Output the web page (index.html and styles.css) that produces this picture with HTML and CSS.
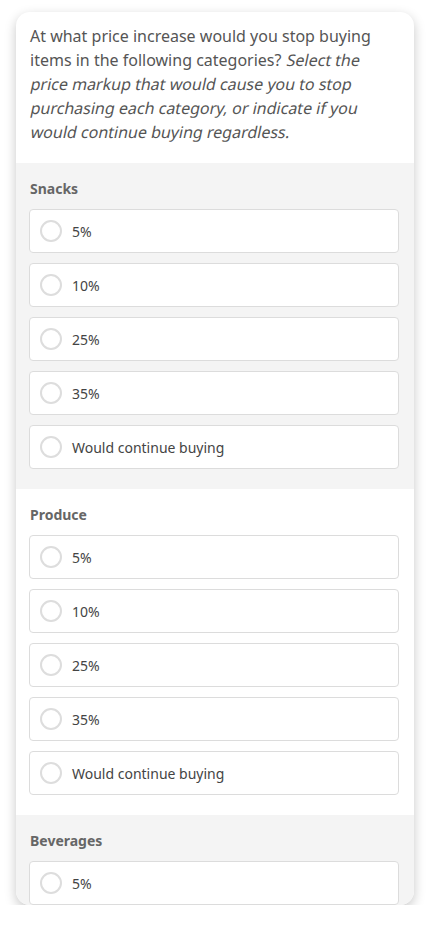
FILE: index.html
```html
<!DOCTYPE html>
<html>
<head>
<meta charset="utf-8">
<link rel="stylesheet" href="styles.css">
</head>
<body>
<div class="card">
  <div class="question">At what price increase would you stop buying items in the following categories? <span class="oblique">Select the</span><br><span class="oblique">price markup that would cause you to stop</span><br><span class="oblique">purchasing each category, or indicate if you</span><br><span class="oblique">would continue buying regardless.</span></div>

  <div class="section gray">
    <div class="label">Snacks</div>
    <div class="options">
      <div class="option"><span class="radio"></span><span>5%</span></div>
      <div class="option"><span class="radio"></span><span>10%</span></div>
      <div class="option"><span class="radio"></span><span>25%</span></div>
      <div class="option"><span class="radio"></span><span>35%</span></div>
      <div class="option"><span class="radio"></span><span>Would continue buying</span></div>
    </div>
  </div>

  <div class="section">
    <div class="label">Produce</div>
    <div class="options">
      <div class="option"><span class="radio"></span><span>5%</span></div>
      <div class="option"><span class="radio"></span><span>10%</span></div>
      <div class="option"><span class="radio"></span><span>25%</span></div>
      <div class="option"><span class="radio"></span><span>35%</span></div>
      <div class="option"><span class="radio"></span><span>Would continue buying</span></div>
    </div>
  </div>

  <div class="section gray">
    <div class="label">Beverages</div>
    <div class="options">
      <div class="option"><span class="radio"></span><span>5%</span></div>
    </div>
  </div>
</div>
</body>
</html>
```

FILE: styles.css
```css
* { box-sizing: border-box; }
html, body {
  margin: 0;
  padding: 0;
  background: #ffffff;
}
body {
  padding: 12px 16px 0 16px;
  font-family: "Noto Sans", "Open Sans", sans-serif;
}
.card {
  width: 398px;
  height: 893px;
  background: #ffffff;
  border-radius: 14px;
  overflow: hidden;
  box-shadow: 0 4px 12px rgba(0, 0, 0, 0.22);
}
.question {
  padding: 12px 15px 19px 14px;
  font-size: 16px;
  line-height: 24px;
  color: #555555;
}
.oblique {
  display: inline-block;
  font-style: normal;
  transform: skewX(-12deg);
  transform-origin: 0 70%;
}
.section {
  padding: 16px 15px 20px 13px;
  background: #ffffff;
}
.section.gray {
  background: #f4f4f4;
}
.label {
  font-size: 14px;
  line-height: 20px;
  font-weight: 700;
  color: #666666;
  margin-bottom: 10px;
  padding-left: 1px;
}
.options {
  display: flex;
  flex-direction: column;
  gap: 10px;
}
.option {
  height: 44px;
  display: flex;
  align-items: center;
  gap: 10px;
  padding-left: 10px;
  background: #ffffff;
  border: 1px solid #dcdcdc;
  border-radius: 4px;
  font-size: 14px;
  color: #444444;
}
.radio {
  width: 22px;
  height: 22px;
  border: 2px solid #dddddd;
  border-radius: 50%;
  flex: none;
}
```
